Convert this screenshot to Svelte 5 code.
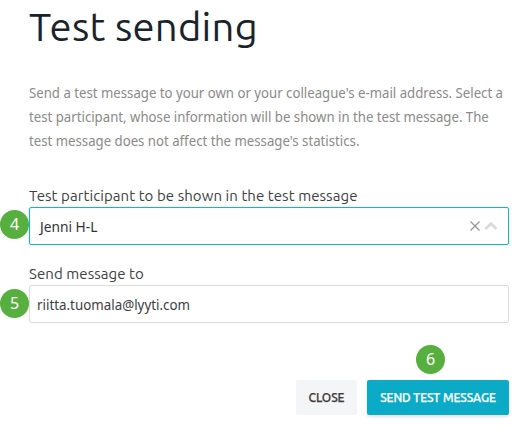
<script>
    let participant = "Jenni H-L";
    let email = "riitta.tuomala@lyyti.com";
</script>

<main>
    <h1>Test sending</h1>
    <p class="intro">
        Send a test message to your own or your colleague's e-mail address. Select a<br />
        test participant, whose information will be shown in the test message. The<br />
        test message does not affect the message's statistics.
    </p>

    <div class="field">
        <span class="label">Test participant to be shown in the test message</span>
        <div class="control select">
            <span class="value">{participant}</span>
            <svg class="clear" width="10" height="10" viewBox="0 0 10 10">
                <path d="M.5 .5l9 9M9.5 .5l-9 9" />
            </svg>
            <svg class="arrow" width="14" height="10" viewBox="0 0 14 10">
                <path d="M1.5 8L7 2.5l5.5 5.5" />
            </svg>
        </div>
        <span class="badge">4</span>
    </div>

    <div class="field second">
        <span class="label">Send message to</span>
        <div class="control"><span class="email">{email}</span></div>
        <span class="badge">5</span>
    </div>

    <footer>
        <button class="close">CLOSE</button>
        <button class="send">SEND TEST MESSAGE</button>
        <span class="badge top">6</span>
    </footer>
</main>

<style>
    :global(body) {
        background: #fff;
    }
    * {
        box-sizing: border-box;
    }
    main {
        width: 530px;
        height: 443px;
        padding: 0 21px 0 29px;
        overflow: hidden;
        font-family: Ubuntu, "Noto Sans", sans-serif;
        color: #3c4043;
    }
    h1 {
        margin: 0;
        height: 80px;
        line-height: 54px;
        font-size: 40px;
        font-weight: 400;
        letter-spacing: 0.25px;
        color: #19242a;
        white-space: nowrap;
    }
    .intro {
        margin: 0;
        width: max-content;
        height: 103px;
        line-height: 24px;
        font-family: "Noto Sans", sans-serif;
        font-size: 15px;
        color: #8a8a8a;
        white-space: nowrap;
        transform: scaleX(0.88);
        transform-origin: 0 0;
    }
    .field {
        position: relative;
        height: 62px;
    }
    .second {
        margin-top: 16px;
    }
    .label {
        display: block;
        height: 24px;
        line-height: 26px;
        font-size: 15px;
        letter-spacing: 0.07px;
        white-space: nowrap;
    }
    .control {
        display: flex;
        align-items: center;
        height: 38px;
        padding: 0 7px;
        border: 1px solid #dcdcdc;
        border-radius: 2px;
        font-family: "Noto Sans", sans-serif;
        font-size: 15px;
    }
    .select {
        padding: 0 10px;
        border-color: #06bad0;
        color: #303336;
    }
    .value,
    .email {
        transform: scaleX(0.89);
        transform-origin: 0 0;
    }
    .value {
        flex: 1;
        transform: scaleX(0.915);
    }
    svg {
        fill: none;
    }
    .clear {
        stroke: #8f8f8f;
        stroke-width: 1.1;
    }
    .arrow {
        margin: 0 0 0 4px;
        stroke: #d8d8d8;
        stroke-width: 2.6;
    }
    .badge {
        position: absolute;
        left: -29px;
        top: 27px;
        width: 29px;
        height: 29px;
        border-radius: 50%;
        background: #56af3e;
        color: #fff;
        font-family: "Noto Sans", sans-serif;
        font-size: 16px;
        line-height: 29px;
        text-align: center;
    }
    .second .badge {
        top: 28px;
    }
    footer {
        position: relative;
        display: flex;
        justify-content: flex-end;
        gap: 10px;
        margin-top: 57px;
    }
    .badge.top {
        left: 387px;
        top: -35px;
    }
    button {
        height: 35px;
        padding: 0;
        border: 0;
        border-radius: 2px;
        font-family: Ubuntu, "Noto Sans", sans-serif;
        font-size: 12px;
        font-weight: 500;
        letter-spacing: -0.07px;
        white-space: nowrap;
        -webkit-text-stroke: 0.25px currentColor;
    }
    .close {
        width: 61px;
        background: #f4f5f7;
        color: #3c3c3c;
    }
    .send {
        width: 142px;
        background: #0babc7;
        color: #fff;
        box-shadow: 0 2px 3px rgba(0, 0, 0, 0.12);
    }
</style>
